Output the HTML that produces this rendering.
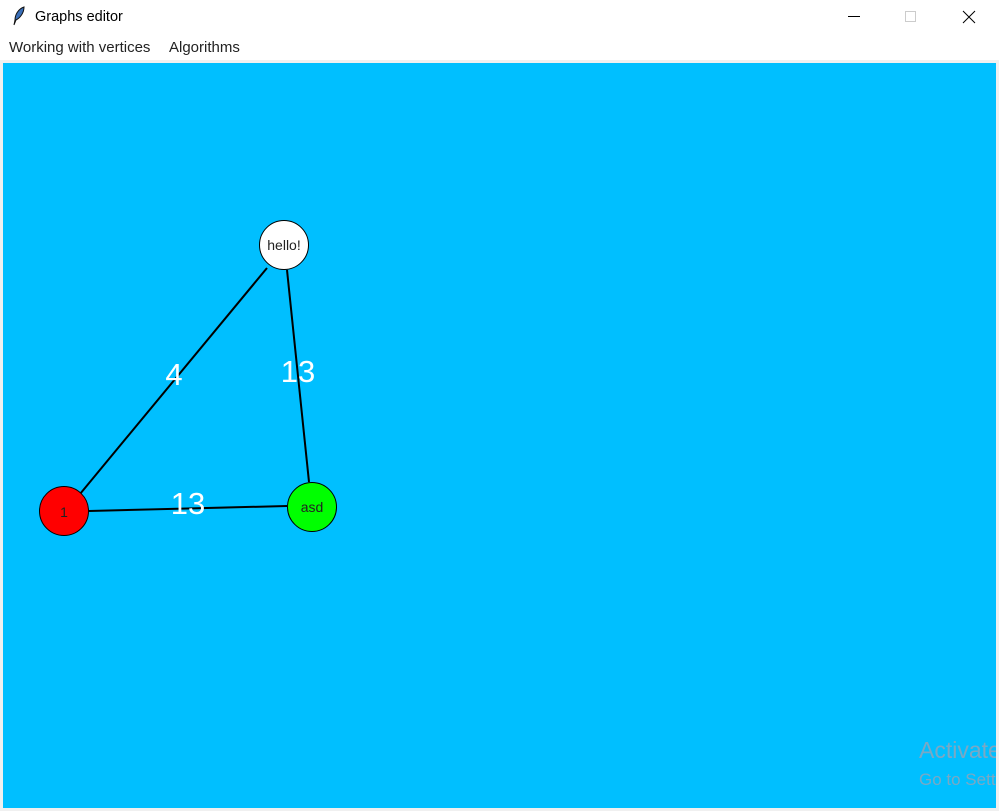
<!DOCTYPE html>
<html><head><style>
body{margin:0;width:999px;height:811px;background:#f0f0f0;position:relative;overflow:hidden;font-family:"Liberation Sans",sans-serif}
#title{position:absolute;left:0;top:0;width:999px;height:34px;background:#fff}
#menu{position:absolute;left:0;top:34px;width:999px;height:26px;background:#fff}
.t{position:absolute;font-size:14px;color:#000;white-space:nowrap}
#canvas{position:absolute;left:3px;top:63px;width:993px;height:745px;background:#00bfff}
</style></head><body>
<div id="title">
<svg style="position:absolute;left:12px;top:6px" width="14" height="20" viewBox="0 0 14 20"><path d="M12 1 C6 3 3 9 3 14 L2 19 L4 14 C8 12 12 7 12 1Z" fill="#3a6fb8" stroke="#111" stroke-width="1"/></svg>
<div class="t" style="left:35px;top:9px;font-size:14.5px">Graphs editor</div>
<svg style="position:absolute;left:845px;top:9px" width="135" height="16"><line x1="3" y1="7.5" x2="15" y2="7.5" stroke="#000"/><rect x="60.5" y="2.5" width="10" height="10" fill="none" stroke="#ccc"/><path d="M118 2 L130 14 M130 2 L118 14" stroke="#000"/></svg>
</div>
<div id="menu">
<div class="t" style="left:9px;top:5px;color:#222;font-size:15px">Working with vertices</div>
<div class="t" style="left:169px;top:5px;color:#222;font-size:15px">Algorithms</div>
</div>
<div id="canvas"></div>
<svg style="position:absolute;left:0;top:0" width="999" height="811">
<g stroke="#000" stroke-width="2">
<line x1="267" y1="268" x2="80" y2="494"/>
<line x1="287" y1="270" x2="309" y2="482"/>
<line x1="89" y1="511" x2="287" y2="506"/>
</g>
<g stroke="#000" stroke-width="1">
<circle cx="284" cy="245" r="24.5" fill="#fff"/>
<circle cx="64" cy="511" r="24.5" fill="#f00"/>
<circle cx="312" cy="507" r="24.5" fill="#0f0"/>
</g>
<g font-family="Liberation Sans,sans-serif" text-anchor="middle">
<text x="284" y="250" font-size="14" fill="#222">hello!</text>
<text x="64" y="517" font-size="14" fill="#222">1</text>
<text x="312" y="512" font-size="14" fill="#222">asd</text>
<text x="174" y="385" font-size="31" fill="#fff">4</text>
<text x="298" y="382" font-size="31" fill="#fff">13</text>
<text x="188" y="514" font-size="31" fill="#fff">13</text>
<text x="919" y="758" font-size="23" fill="#7aa8c4" text-anchor="start">Activate</text>
<text x="919" y="785" font-size="17" fill="#7aa8c4" text-anchor="start">Go to Settings</text>
</g>
</svg>
<div style="position:absolute;left:996px;top:63px;width:3px;height:748px;background:#f0f0f0"></div>
</body></html>
